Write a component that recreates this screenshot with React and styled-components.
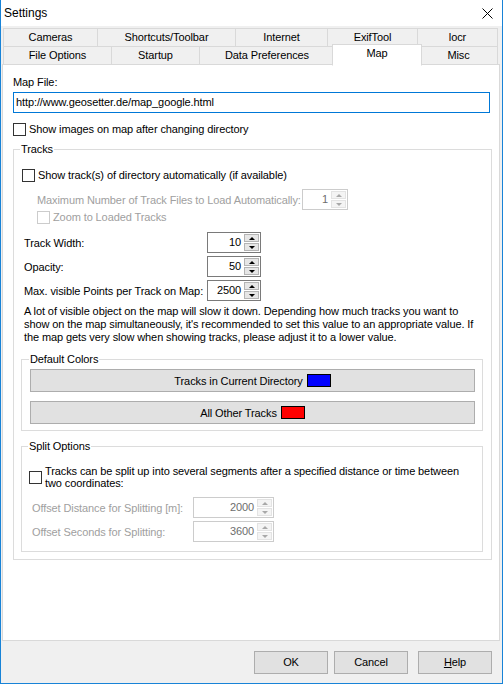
import React from 'react';
import styled, { createGlobalStyle } from 'styled-components';

const GlobalStyle = createGlobalStyle`
  html, body {
    margin: 0;
    padding: 0;
    background: #ffffff;
  }
  body {
    font-family: "Liberation Sans", Arial, sans-serif;
    font-size: 11px;
    letter-spacing: -0.1px;
    color: #000000;
  }
`;

const Window = styled.div`
  box-sizing: border-box;
  width: 503px;
  height: 684px;
  display: flex;
  flex-direction: column;
  background: #f0f0f0;
  border: 1px solid #1883d7;
  border-top: none;
`;

const TitleBar = styled.div`
  height: 26px;
  flex-shrink: 0;
  display: flex;
  align-items: center;
  justify-content: space-between;
  padding: 0 9px 0 3px;
  background: #ffffff;
`;

const Title = styled.span`
  font-size: 12px;
  letter-spacing: 0;
`;

const TabStrip = styled.div`
  display: flex;
  flex-direction: column;
  margin-top: 2px;
  padding-left: 2px;
`;

const TabRow = styled.div`
  display: flex;
  height: 19px;

  & + & {
    margin-top: -1px;
  }
`;

const Tab = styled.div`
  box-sizing: border-box;
  flex-shrink: 0;
  width: ${p => (p.$active ? p.$w + 4 : p.$w)}px;
  height: ${p => (p.$active ? 22 : 19)}px;
  margin: ${p => (p.$active ? '-2px -2px 0 -3px' : '0 0 0 -1px')};
  border: 1px solid #d9d9d9;
  border-bottom-color: ${p => (p.$active ? '#ffffff' : '#d9d9d9')};
  background: ${p => (p.$active ? '#ffffff' : '#f0f0f0')};
  text-align: center;
  line-height: 17px;
  white-space: nowrap;
  position: relative;
  z-index: ${p => (p.$active ? 2 : 0)};

  &:first-child {
    margin-left: 0;
  }
`;

const Panel = styled.div`
  box-sizing: border-box;
  position: relative;
  z-index: 1;
  width: 498px;
  height: 577px;
  margin: -1px 0 0 1px;
  padding: 11px 8px 0 10px;
  border: 1px solid #d9d9d9;
  background: #ffffff;
`;

const Label = styled.div`
  line-height: 13px;
  white-space: nowrap;
  color: ${p => (p.$disabled ? '#a0a0a0' : '#000000')};
`;

const TextInput = styled.div`
  box-sizing: border-box;
  margin-top: 3px;
  width: 477px;
  height: 21px;
  padding: 0 2px;
  border: 1px solid #0078d7;
  line-height: 19px;
  white-space: nowrap;
`;

const CheckRow = styled.div`
  display: flex;
  align-items: center;
  gap: 3px;
  margin-top: ${p => p.$mt || 0}px;
  padding-left: ${p => p.$pl || 0}px;
  line-height: ${p => p.$lh || 13}px;
  color: ${p => (p.$disabled ? '#a0a0a0' : '#000000')};
`;

const CheckBox = styled.span`
  box-sizing: border-box;
  flex-shrink: 0;
  width: 13px;
  height: 13px;
  border: 1px solid ${p => (p.$disabled ? '#cccccc' : '#333333')};
  background: #ffffff;
`;

const GroupBox = styled.fieldset`
  box-sizing: border-box;
  min-width: 0;
  width: ${p => p.$w}px;
  margin: ${p => p.$mt}px 0 0 0;
  padding: 0 ${p => p.$pr}px ${p => p.$pb}px ${p => p.$pl}px;
  border: 1px solid #dcdcdc;
`;

const Legend = styled.legend`
  padding: 0 1px;
  margin-left: ${p => p.$ml || -1}px;
  line-height: 13px;
`;

const FieldRow = styled.div`
  display: flex;
  align-items: center;
  margin-top: ${p => p.$mt}px;
`;

const FieldLabel = styled.span`
  box-sizing: border-box;
  flex-shrink: 0;
  width: ${p => p.$w}px;
  padding-left: ${p => p.$pl}px;
  white-space: nowrap;
  color: ${p => (p.$disabled ? '#a0a0a0' : '#000000')};
`;

const Spin = styled.div`
  box-sizing: border-box;
  flex-shrink: 0;
  display: flex;
  width: ${p => p.$w}px;
  height: 21px;
  padding: 1px;
  border: 1px solid ${p => (p.$disabled ? '#cccccc' : '#7a7a7a')};
  background: #ffffff;
`;

const SpinValue = styled.span`
  flex: 1;
  text-align: right;
  padding-right: 3px;
  line-height: 17px;
  color: ${p => (p.$disabled ? '#6d6d6d' : '#000000')};
`;

const SpinButtons = styled.div`
  display: flex;
  flex-direction: column;
  gap: 1px;
  width: 15px;
`;

const SpinButton = styled.div`
  box-sizing: border-box;
  flex: 1;
  display: flex;
  align-items: center;
  justify-content: center;
  border: 1px solid ${p => (p.$disabled ? '#e3e3e3' : '#b4b4b4')};
  background: ${p => (p.$disabled ? '#f4f4f4' : '#e6e6e6')};
`;

const Arrow = styled.span`
  width: 0;
  height: 0;
  border-left: 3px solid transparent;
  border-right: 3px solid transparent;
  ${p => (p.$down ? 'border-top' : 'border-bottom')}: 3px solid ${p => (p.$disabled ? '#a8a8a8' : '#000000')};
`;

const Paragraph = styled.div`
  margin-top: 4px;
  padding-left: 3px;
  line-height: 13px;
  white-space: nowrap;
`;

const ColorButton = styled.div`
  box-sizing: border-box;
  display: flex;
  align-items: center;
  justify-content: center;
  gap: 4px;
  width: 445px;
  height: 23px;
  margin-top: ${p => p.$mt}px;
  border: 1px solid #adadad;
  background: #e1e1e1;
`;

const Swatch = styled.span`
  box-sizing: border-box;
  width: 24px;
  height: 13px;
  border: 1px solid #000000;
  background: ${p => p.$color};
`;

const Footer = styled.div`
  display: flex;
  justify-content: flex-end;
  padding: 10px 10px 0 0;
`;

const DialogButton = styled.div`
  box-sizing: border-box;
  width: 74px;
  height: 23px;
  margin-left: ${p => p.$ml || 0}px;
  border: 1px solid #adadad;
  background: #e1e1e1;
  text-align: center;
  line-height: 21px;
`;

const tabRows = [
  [
    { label: 'Cameras', w: 95 },
    { label: 'Shortcuts/Toolbar', w: 139 },
    { label: 'Internet', w: 93 },
    { label: 'ExifTool', w: 91 },
    { label: 'locr', w: 81 },
  ],
  [
    { label: 'File Options', w: 109 },
    { label: 'Startup', w: 89 },
    { label: 'Data Preferences', w: 136 },
    { label: 'Map', w: 86, active: true },
    { label: 'Misc', w: 79 },
  ],
];

const CloseIcon = () => (
  <svg width="11" height="11" viewBox="0 0 11 11">
    <path d="M0.5 0.5 L10.5 10.5 M10.5 0.5 L0.5 10.5" stroke="#000" strokeWidth="1" fill="none" />
  </svg>
);

const SpinEdit = ({ value, w, disabled }) => (
  <Spin $w={w} $disabled={disabled}>
    <SpinValue $disabled={disabled}>{value}</SpinValue>
    <SpinButtons>
      <SpinButton $disabled={disabled}>
        <Arrow $disabled={disabled} />
      </SpinButton>
      <SpinButton $disabled={disabled}>
        <Arrow $down $disabled={disabled} />
      </SpinButton>
    </SpinButtons>
  </Spin>
);

const App = () => {
  return (
    <>
      <GlobalStyle />
      <Window>
        <TitleBar>
          <Title>Settings</Title>
          <CloseIcon />
        </TitleBar>

        <TabStrip>
          {tabRows.map((row, i) => (
            <TabRow key={i}>
              {row.map(t => (
                <Tab key={t.label} $w={t.w} $active={t.active}>
                  {t.label}
                </Tab>
              ))}
            </TabRow>
          ))}
        </TabStrip>

        <Panel>
          <Label>Map File:</Label>
          <TextInput>http://www.geosetter.de/map_google.html</TextInput>

          <CheckRow $mt={10}>
            <CheckBox />
            Show images on map after changing directory
          </CheckRow>

          <GroupBox $w={479} $mt={7} $pl={7} $pr={8} $pb={7}>
            <Legend $ml={0}>Tracks</Legend>

            <CheckRow $mt={13} $pl={1}>
              <CheckBox />
              Show track(s) of directory automatically (if available)
            </CheckRow>

            <FieldRow $mt={7}>
              <FieldLabel $w={281} $pl={16} $disabled>
                Maximum Number of Track Files to Load Automatically:
              </FieldLabel>
              <SpinEdit value="1" w={46} disabled />
            </FieldRow>

            <CheckRow $mt={1} $pl={16} $disabled>
              <CheckBox $disabled />
              Zoom to Loaded Tracks
            </CheckRow>

            <FieldRow $mt={8}>
              <FieldLabel $w={186} $pl={3}>Track Width:</FieldLabel>
              <SpinEdit value="10" w={54} />
            </FieldRow>
            <FieldRow $mt={3}>
              <FieldLabel $w={186} $pl={3}>Opacity:</FieldLabel>
              <SpinEdit value="50" w={54} />
            </FieldRow>
            <FieldRow $mt={3}>
              <FieldLabel $w={186} $pl={3}>Max. visible Points per Track on Map:</FieldLabel>
              <SpinEdit value="2500" w={54} />
            </FieldRow>

            <Paragraph>
              A lot of visible object on the map will slow it down. Depending how much tracks you want to
              <br />
              show on the map simultaneously, it's recommended to set this value to an appropriate value. If
              <br />
              the map gets very slow when showing tracks, please adjust it to a lower value.
            </Paragraph>

            <GroupBox $w={462} $mt={9} $pl={8} $pr={7} $pb={6}>
              <Legend>Default Colors</Legend>
              <ColorButton $mt={3}>
                Tracks in Current Directory
                <Swatch $color="#0000ff" />
              </ColorButton>
              <ColorButton $mt={9}>
                All Other Tracks
                <Swatch $color="#ff0000" />
              </ColorButton>
            </GroupBox>

            <GroupBox $w={462} $mt={9} $pl={7} $pr={7} $pb={9}>
              <Legend $ml={0}>Split Options</Legend>
              <CheckRow $mt={12} $lh={12}>
                <CheckBox />
                <span>
                  Tracks can be split up into several segments after a specified distance or time between
                  <br />
                  two coordinates:
                </span>
              </CheckRow>
              <FieldRow $mt={8}>
                <FieldLabel $w={164} $pl={3} $disabled>
                  Offset Distance for Splitting [m]:
                </FieldLabel>
                <SpinEdit value="2000" w={81} disabled />
              </FieldRow>
              <FieldRow $mt={3}>
                <FieldLabel $w={164} $pl={3} $disabled>
                  Offset Seconds for Splitting:
                </FieldLabel>
                <SpinEdit value="3600" w={81} disabled />
              </FieldRow>
            </GroupBox>
          </GroupBox>
        </Panel>

        <Footer>
          <DialogButton>OK</DialogButton>
          <DialogButton $ml={6}>Cancel</DialogButton>
          <DialogButton $ml={10}>
            <u>H</u>elp
          </DialogButton>
        </Footer>
      </Window>
    </>
  );
};

export default App;
